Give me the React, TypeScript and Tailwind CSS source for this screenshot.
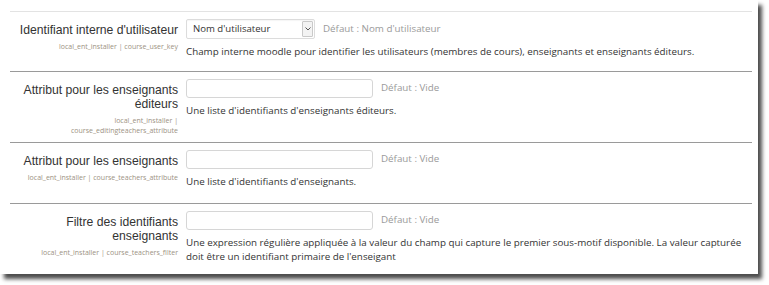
import React from "react";

type Row = {
  label: string[];
  keys: string[];
  control: "select" | "input";
  def: string;
  desc: string[];
  h: string;
};

const rows: Row[] = [
  {
    label: ["Identifiant interne d'utilisateur"],
    keys: ["local_ent_installer | course_user_key"],
    control: "select",
    def: "Défaut : Nom d'utilisateur",
    desc: [
      "Champ interne moodle pour identifier les utilisateurs (membres de cours), enseignants et enseignants éditeurs.",
    ],
    h: "h-[60px]",
  },
  {
    label: ["Attribut pour les enseignants", "éditeurs"],
    keys: ["local_ent_installer |", "course_editingteachers_attribute"],
    control: "input",
    def: "Défaut : Vide",
    desc: ["Une liste d'identifiants d'enseignants éditeurs."],
    h: "h-[71px]",
  },
  {
    label: ["Attribut pour les enseignants"],
    keys: ["local_ent_installer | course_teachers_attribute"],
    control: "input",
    def: "Défaut : Vide",
    desc: ["Une liste d'identifiants d'enseignants."],
    h: "h-[61px]",
  },
  {
    label: ["Filtre des identifiants", "enseignants"],
    keys: ["local_ent_installer | course_teachers_filter"],
    control: "input",
    def: "Défaut : Vide",
    desc: [
      "Une expression régulière appliquée à la valeur du champ qui capture le premier sous-motif disponible. La valeur capturée",
      "doit être un identifiant primaire de l'enseigant",
    ],
    h: "h-[71px]",
  },
];

const SettingRow: React.FC<{ row: Row; first: boolean }> = ({ row, first }) => (
  <div
    className={`flex ${row.h} ${first ? "border-t border-[#e3e3e3]" : "border-t border-[#9a9a9a]"}`}
  >
    <div className="w-[168px] shrink-0 text-right pt-[11px]">
      <div className="font-['Liberation_Sans',Arial,sans-serif] text-[12.2px] leading-[14px] text-[#333]">
        {row.label.map((l) => (
          <div key={l}>{l}</div>
        ))}
      </div>
      <div className="mt-[5px] font-['Open_Sans',sans-serif] text-[7px] leading-[10px] text-[#9c9283]">
        {row.keys.map((k) => (
          <div key={k}>{k}</div>
        ))}
      </div>
    </div>
    <div className="ml-[8px] flex-1 pt-[7px] font-['Open_Sans',sans-serif]">
      <div className="flex items-center gap-[8px]">
        {row.control === "select" ? (
          <div className="flex h-[20px] w-[129px] items-center justify-between rounded-[2px] border border-[#dcdcdc] bg-white pl-[6px] pr-[1px] shadow-[inset_0_1px_1px_rgba(0,0,0,0.04)]">
            <span className="text-[9.6px] text-[#333]">Nom d'utilisateur</span>
            <span className="flex h-[16px] w-[11px] items-center justify-center rounded-[1px] border border-[#c9c9c9] bg-[#f3f3f3]">
              <svg width="6" height="4" viewBox="0 0 6 4">
                <path d="M0.5 0.5 L3 3 L5.5 0.5" fill="none" stroke="#555" strokeWidth="1" />
              </svg>
            </span>
          </div>
        ) : (
          <div className="h-[19px] w-[187px] rounded-[3px] border border-[#d6d6d6] bg-white" />
        )}
        <span className="text-[9.8px] text-[#9a9a9a]">{row.def}</span>
      </div>
      <div className="mt-[6px] text-[9.8px] leading-[14px] text-[#333]">
        {row.desc.map((d) => (
          <div key={d}>{d}</div>
        ))}
      </div>
    </div>
  </div>
);

export default function App() {
  return (
    <div className="h-[285px] w-[769px] bg-white">
      <div className="w-[758px] bg-white pl-[10px] pr-[6px] pt-[11px] shadow-[4px_5px_4px_rgba(0,0,0,0.7)]">
        {rows.map((r, i) => (
          <SettingRow key={i} row={r} first={i === 0} />
        ))}
      </div>
    </div>
  );
}
